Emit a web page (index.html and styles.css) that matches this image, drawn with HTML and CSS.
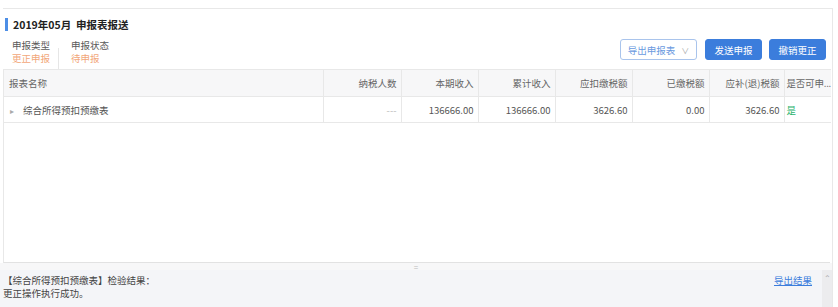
FILE: index.html
```
<!DOCTYPE html>
<html lang="zh-CN">
<head>
    <meta charset="UTF-8">
    <title>申报表报送</title>
    <link rel="stylesheet" href="styles.css">
</head>
<body>
    <div class="panel">
        <h1 class="title">2019年05月&nbsp;&nbsp;申报表报送</h1>

        <div class="meta">
            <div class="meta-left">
                <div class="meta-item">
                    <div class="meta-label">申报类型</div>
                    <div class="meta-value">更正申报</div>
                </div>
                <div class="meta-sep"></div>
                <div class="meta-item">
                    <div class="meta-label">申报状态</div>
                    <div class="meta-value">待申报</div>
                </div>
            </div>
            <div class="meta-right">
                <button class="btn btn-outline">导出申报表 <span class="caret">&#8744;</span></button>
                <button class="btn btn-primary">发送申报</button>
                <button class="btn btn-primary">撤销更正</button>
            </div>
        </div>

        <div class="grid">
            <table class="report-table">
                <colgroup>
                    <col style="width:319px">
                    <col style="width:78px">
                    <col style="width:77px">
                    <col style="width:77px">
                    <col style="width:77px">
                    <col style="width:77px">
                    <col style="width:75px">
                    <col style="width:47px">
                </colgroup>
                <thead>
                    <tr>
                        <th class="left">报表名称</th>
                        <th>纳税人数</th>
                        <th>本期收入</th>
                        <th>累计收入</th>
                        <th>应扣缴税额</th>
                        <th>已缴税额</th>
                        <th>应补(退)税额</th>
                        <th class="last">是否可申...</th>
                    </tr>
                </thead>
                <tbody>
                    <tr>
                        <td class="left"><span class="expander">&#9656;</span>综合所得预扣预缴表</td>
                        <td class="muted">---</td>
                        <td>136666.00</td>
                        <td>136666.00</td>
                        <td>3626.60</td>
                        <td>0.00</td>
                        <td>3626.60</td>
                        <td class="last yes">是</td>
                    </tr>
                </tbody>
            </table>
        </div>

        <div class="splitter">=</div>

        <div class="result">
            <div class="result-text">
                <div>【综合所得预扣预缴表】检验结果：</div>
                <div>更正操作执行成功。</div>
            </div>
            <a href="#" class="result-link">导出结果</a>
            <div class="scrollbar"><span class="arrow">&#8963;</span></div>
        </div>
    </div>
</body>
</html>
```

FILE: styles.css
```
body {
    margin: 0;
    font-family: "Noto Sans CJK SC", "Liberation Sans", sans-serif;
    font-size: 9.5px;
    color: #555;
    background: #fff;
}

.panel {
    margin: 8px 5px 0 3px;
    height: 299px;
    border-top: 1px solid #e8e8e8;
    border-right: 1px solid #e8e8e8;
    display: flex;
    flex-direction: column;
    box-sizing: border-box;
}

.title {
    margin: 9px 0 0 2px;
    padding-left: 5px;
    border-left: 3px solid #4d8ee6;
    font-size: 10.5px;
    line-height: 13px;
    height: 13px;
    color: #222;
    font-weight: bold;
}

.meta {
    height: 38px;
    display: flex;
    justify-content: space-between;
    align-items: flex-start;
    padding: 0 6px 0 9px;
}

.meta-left {
    display: flex;
    padding-top: 8px;
}

.meta-item {
    line-height: 13px;
}

.meta-label {
    color: #5a5a5a;
}

.meta-value {
    color: #f2a77a;
}

.meta-sep {
    width: 1px;
    height: 21px;
    margin: 9px 12px 0 8px;
    background: #e6e6e6;
}

.meta-right {
    display: flex;
    gap: 7px;
    padding-top: 8px;
}

.btn {
    box-sizing: border-box;
    height: 21px;
    padding: 0;
    font-family: inherit;
    font-size: 9.5px;
    border-radius: 3px;
    white-space: nowrap;
    cursor: pointer;
}

.btn-outline {
    width: 77px;
    background: #fff;
    border: 1px solid #a9c4ec;
    color: #6a9ae0;
    margin-right: 1px;
}

.btn-outline .caret {
    color: #aaa;
    font-size: 8px;
    margin-left: 4px;
}

.btn-primary {
    width: 57px;
    background: #3b7ddc;
    border: 1px solid #3b7ddc;
    color: #fff;
}

.grid {
    flex: 1;
    border-left: 1px solid #e8e8e8;
    border-bottom: 1px solid #e2e2e2;
    margin-right: 2px;
}

.report-table {
    width: 827px;
    border-collapse: collapse;
    table-layout: fixed;
}

.report-table th,
.report-table td {
    border: 1px solid #e8e8e8;
    text-align: right;
    padding: 0 4px;
    white-space: nowrap;
    overflow: hidden;
    font-weight: normal;
}

.report-table tr > :first-child {
    border-left: none;
}

.report-table th {
    height: 26px;
    background: #f7f7f8;
    color: #666;
}

.report-table td {
    height: 25px;
    color: #555;
}

.report-table .left {
    text-align: left;
    padding-left: 5px;
}

.report-table .last {
    text-align: left;
    padding: 0 0 0 2px;
    border-right: none;
    letter-spacing: -0.2px;
}

.expander {
    color: #aaa;
    font-size: 8px;
    margin: 0 9px 0 1px;
}

.report-table .muted {
    color: #bbb;
}

.report-table .yes {
    color: #2bb36b;
}

.splitter {
    height: 7px;
    line-height: 7px;
    text-align: center;
    color: #bbb;
    font-size: 8px;
    background: #f7f7f8;
    margin-left: -3px;
}

.result {
    flex: 0 0 37px;
    display: flex;
    background: #f4f5f8;
    margin-left: -3px;
}

.result-text {
    flex: 1;
    padding: 4px 0 0 3px;
    line-height: 13px;
    color: #444;
}

.result-link {
    color: #3b7ddc;
    text-decoration: underline;
    line-height: 13px;
    padding-top: 4px;
    margin-right: 10px;
}

.scrollbar {
    width: 10px;
    background: #ececee;
    text-align: center;
}

.scrollbar .arrow {
    color: #aaa;
    font-size: 8px;
    line-height: 14px;
}
```
